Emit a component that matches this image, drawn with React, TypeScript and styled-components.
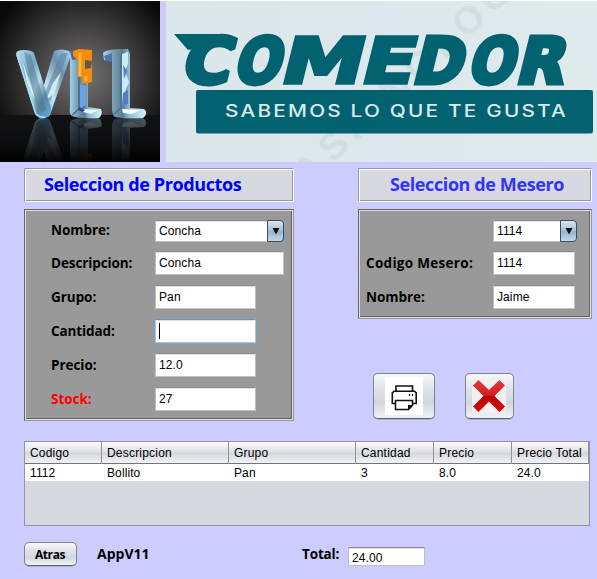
import React from "react";
import styled, { createGlobalStyle, css } from "styled-components";

const Global = createGlobalStyle`
  * { box-sizing: border-box; }
  body { margin: 0; background: #ccf; overflow: hidden; }
`;

const labelFont = '"Open Sans", "Noto Sans", sans-serif';
const inputFont = '"Liberation Sans", Arial, sans-serif';

const Screen = styled.main`
  width: 597px;
  height: 579px;
  background: #ccccff;
  border-top: 1px solid #fff;
  overflow: hidden;
  font-family: ${inputFont};
  color: #000;
`;

const Header = styled.header`
  display: flex;
  justify-content: space-between;
  height: 161px;
  svg { display: block; flex: none; }
`;

const Columns = styled.div`
  display: grid;
  grid-template-columns: 270px 234px;
  column-gap: 64px;
  align-items: start;
  padding: 6px 0 0 24px;
  height: 279px;
`;

const Column = styled.section`
  display: flex;
  flex-direction: column;
  gap: 7px;
`;

const TitleBar = styled.div<{ $color: string; $indent: number }>`
  height: 34px;
  padding-left: ${(p) => p.$indent}px;
  border: 1px solid #999;
  border-right-color: #fff;
  border-bottom-color: #fff;
  background: #d6d9e0;
  box-shadow: inset 1px 1px #fff, inset -1px -1px #999;
  color: ${(p) => p.$color};
`;

const Heading = styled.h2<{ $track: number }>`
  margin: 0;
  font: 700 18px/30px ${labelFont};
  letter-spacing: ${(p) => p.$track}px;
  white-space: nowrap;
`;

const Panel = styled.div<{ $h: number; $pad: number; $label: number }>`
  height: ${(p) => p.$h}px;
  padding: 10px 0 0 ${(p) => p.$pad}px;
  display: grid;
  grid-template-columns: ${(p) => p.$label}px auto;
  grid-template-rows: 31px;
  grid-auto-rows: 34px;
  justify-content: start;
  align-content: start;
  background: #999;
  border: 1px solid #666;
  border-right-color: #999;
  border-bottom-color: #999;
  box-shadow: inset 1px 1px #ddd, inset -1px -1px #ddd, inset -2px -2px #666;
`;

const Label = styled.label<{ $track?: number; $red?: boolean }>`
  font: 700 13.5px/25px ${labelFont};
  letter-spacing: ${(p) => p.$track ?? -0.05}px;
  color: ${(p) => (p.$red ? "#f00" : "#000")};
  white-space: nowrap;
  &:first-child { line-height: 21px; }
`;

const Field = styled.div<{ $w: number; $h?: number; $focus?: boolean }>`
  width: ${(p) => p.$w}px;
  height: ${(p) => p.$h ?? 24}px;
  padding: 1px 3px 0;
  border: 1px solid #c0c0c0;
  border-top-color: #8c8c8c;
  background: #fff;
  box-shadow: inset 0 1px #e2e2e2;
  font: 12px/21px ${inputFont};
  letter-spacing: 0.1px;
  ${(p) => p.$focus && css`
    box-shadow: inset 0 1px #e2e2e2, 0 0 0 1px #73a4d1;
  `}
`;

const Caret = styled.i`
  display: block;
  width: 1px;
  height: 16px;
  margin: 2px 0 0;
  background: #000;
`;

const Combo = styled.div<{ $w: number }>`
  display: flex;
  width: ${(p) => p.$w}px;
  height: 22px;
`;

const ComboValue = styled.div`
  flex: 1;
  padding-left: 3px;
  border: 1px solid #c0c0c0;
  border-top-color: #8c8c8c;
  border-right: 0;
  background: #fff;
  box-shadow: inset 0 1px #e2e2e2;
  font: 12px/21px ${inputFont};
  letter-spacing: 0.1px;
`;

const ComboArrow = styled.div`
  display: grid;
  place-items: center;
  width: 17px;
  border: 1px solid #33506b;
  border-radius: 0 4px 4px 0;
  background: linear-gradient(#dbe5ee, #a9bed0 48%, #9cb4c9 52%, #c0d8ec);
`;

const Actions = styled.div`
  display: flex;
  gap: 30px;
  padding-left: 15px;
  margin-top: 47px;
`;

const Button = styled.button<{ $w: number; $h: number }>`
  display: grid;
  place-items: center;
  width: ${(p) => p.$w}px;
  height: ${(p) => p.$h}px;
  padding: 0 1px 0 0;
  border: 1px solid #80848e;
  border-bottom-color: #5b5f68;
  border-radius: 5px;
  background: linear-gradient(#f7f8fa, #dfe2e8 35%, #d3d6dd 65%, #f0f3fa);
  box-shadow: 0 1px #b0b1d6;
  color: #000;
  font: 700 12px/20px ${labelFont};
  letter-spacing: -0.4px;
`;

const ButtonText = styled.span`
  padding-top: 2px;
`;

const Table = styled.div`
  width: 566px;
  height: 85px;
  margin-left: 24px;
  border: 1px solid #92959f;
  background: #d6d9e0;
`;

const Row = styled.div<{ $head?: boolean }>`
  display: grid;
  grid-template-columns: 77px 127px 127px 78px 78px 77px;
  height: 17px;
  background: #fff;
  font: 12px/18px ${inputFont};
  letter-spacing: 0.1px;
  span { padding-left: 5px; white-space: nowrap; }
  ${(p) => p.$head && css`
    height: 22px;
    line-height: 22px;
    letter-spacing: 0.2px;
    background: linear-gradient(#fafbfc, #dfe2e7 45%, #d5d8de 55%, #f1f3f8);
    border-bottom: 1px solid #70747d;
    span { border-right: 1px solid #8e929b; }
  `}
`;

const Footer = styled.footer`
  display: flex;
  align-items: center;
  height: 26px;
  margin: 15px 0 0 24px;
`;

const AppName = styled.strong`
  width: 205px;
  margin-left: 20px;
  font: 700 14px/22px ${labelFont};
`;

const TotalLabel = styled.strong`
  width: 46px;
  font: 700 13.5px/22px ${labelFont};
  letter-spacing: -0.15px;
`;

const TotalField = styled(Field)`
  margin-top: 5px;
  padding-top: 0;
  line-height: 20px;
`;

const Logo = () => (
  <svg width="160" height="161" viewBox="0 1 160 161">
    <defs>
      <radialGradient id="back" cx=".52" cy=".46" r=".62">
        <stop offset="0" stopColor="#777474" />
        <stop offset=".4" stopColor="#4b494a" />
        <stop offset="1" stopColor="#090909" />
      </radialGradient>
      <linearGradient id="armLeft" x1="0" y1="0" x2="1" y2="1">
        <stop offset="0" stopColor="#b4e2f6" />
        <stop offset=".35" stopColor="#78a6be" />
        <stop offset=".55" stopColor="#b9e0ee" />
        <stop offset=".75" stopColor="#5d87a0" />
        <stop offset="1" stopColor="#56b0e0" />
      </linearGradient>
      <linearGradient id="armRight" x1="1" y1="0" x2="0" y2="1">
        <stop offset="0" stopColor="#a5dcf5" />
        <stop offset=".3" stopColor="#6c8fac" />
        <stop offset=".6" stopColor="#bfe6f4" />
        <stop offset="1" stopColor="#4a9ecb" />
      </linearGradient>
      <linearGradient id="steel" x2="1">
        <stop offset="0" stopColor="#a2d4ee" />
        <stop offset=".2" stopColor="#7fa6bb" />
        <stop offset=".45" stopColor="#587b92" />
        <stop offset=".6" stopColor="#8ebbd4" />
        <stop offset="1" stopColor="#d8f2fb" />
      </linearGradient>
      <linearGradient id="floor" x2="0" y2="1">
        <stop offset="0" stopColor="#131416" stopOpacity=".15" />
        <stop offset="1" stopColor="#000" stopOpacity=".95" />
      </linearGradient>
      <g id="mark">
        <path d="M54 51q8-3 15 0l2 4-21 60q-3 4-11 3l-3-6z" fill="url(#armRight)" />
        <path d="M61 53l7 0-18 49-6-7z" fill="#6386a4" opacity=".6" />
        <path d="M53 83l8-11-7 22-8 6z" fill="#e2f6fc" opacity=".85" />
        <path d="M16 54q0-4 8-4 8 0 10 3l17 55q0 8-6 10-7 1-10-4z" fill="url(#armLeft)" />
        <path d="M24 52l7 3 15 54-4 4-6-8z" fill="#4c7189" opacity=".45" />
        <path d="M22 60l8 23 5 16-8-16z" fill="#effcff" opacity=".75" />
        <path d="M17 55l19 59q4 4 9 3" stroke="#a9e1fc" strokeWidth="1.500" fill="none" />
        <path d="M70 51h18v56l13 2q2 6-2 9-20 1-27-2-3-2-2-10z" fill="url(#steel)" />
        <path d="M79 55v54l-7 6" stroke="#45687c" strokeWidth="1.500" fill="none" />
        <path d="M81 109l18 1-8 4-8-2z" fill="#e7faff" />
        <path d="M80 84l6 2v19l-6 3z" fill="#6ca2df" />
        <path d="M79 107l6 3-2 2-5-2z" fill="#2a459c" />
        <path d="M70 51l8-1v9l-6 1z" fill="#55647a" />
        <path d="M73 51l6-2 13 1v32l-10 2V77h-4V60l-5-4z" fill="#f58c0c" />
        <path d="M80 53v23M86 76v5" stroke="#ffb23e" strokeWidth="3" />
        <path d="M85 60l7 1-1 7-6 1z" fill="#60574f" />
        <path d="M103 53q2-4 25-4l2 5v54l14 1q5 4-1 9-18 1-28-1-3-2-3-9V61l-8-1z" fill="url(#steel)" />
        <path d="M104 56l8-3v9l-6-1z" fill="#5274aa" />
        <path d="M121 54v54l-7 6" stroke="#527388" strokeWidth="1.500" fill="none" />
        <path d="M122 54l6-2v12l-3 7 4 11-5 12 3 8-5 4z" fill="#c8edf8" />
        <path d="M123 65l4 6-3 8zM123 93l5-3v14l-6 2z" fill="#507fc4" />
        <path d="M122 109l19 1-9 4-9-1z" fill="#f1fcff" />
      </g>
    </defs>
    <rect y="1" width="160" height="161" fill="url(#back)" />
    <rect y="115" width="160" height="47" fill="#101113" />
    <use href="#mark" transform="matrix(1 0 0 -1 0 236)" opacity=".4" />
    <rect y="115" width="160" height="47" fill="url(#floor)" />
    <use href="#mark" />
  </svg>
);

/* letter, left edge, advance width */
const wordmark: [string, number, number][] = [
  ["C", 180, 48.5], ["O", 232.5, 46], ["M", 278, 82], ["E", 358.5, 53], ["D", 411, 49.5], ["O", 466.5, 46], ["R", 514.5, 47.6],
];

const Banner = () => (
  <svg width="431" height="161" viewBox="166 1 431 161">
    <defs>
      <linearGradient id="paper"><stop stopColor="#dbe7ea" /><stop offset=".5" stopColor="#dce8ed" /><stop offset="1" stopColor="#deeaeb" /></linearGradient>
    </defs>
    <rect x="166" y="1" width="431" height="161" fill="url(#paper)" />
    <rect x="196" y="90" width="397" height="43.500" rx="2" fill="#006270" />
    {wordmark.map(([ch, x, w]) => (
      <g key={x} transform={`translate(${x} 82.500) skewX(-14)`}>
        <text fontFamily="DejaVu Sans, sans-serif" fontWeight="700" fontSize="63" textLength={w} lengthAdjust="spacingAndGlyphs"
          fill="#006270" stroke="#006270" strokeWidth={ch === "M" || ch === "E" ? 3.5 : 5} strokeLinejoin="miter" strokeMiterlimit="2">{ch}</text>
      </g>
    ))}
    <path d="M174 34h48v9l-34 7z" fill="#006270" />
    <text x="225" y="117" fontFamily="Inter, sans-serif" fontWeight="500" fontSize="17" letterSpacing="1.800" textLength="343" lengthAdjust="spacingAndGlyphs" fill="#dce9eb">SABEMOS LO QUE TE GUSTA</text>
    <text transform="translate(308 187) rotate(-43)" fontFamily="Liberation Sans, sans-serif" fontWeight="700" fontSize="38" textLength="318" fill="#244c55" opacity=".06">ASHINGLOGO</text>
  </svg>
);

const Arrow = () => (
  <svg width="8" height="7"><path d="M.5 0h7L4 6.500z" fill="#111" /></svg>
);

const Select = ({ value, w }: { value: string; w: number }) => (
  <Combo $w={w}><ComboValue>{value}</ComboValue><ComboArrow><Arrow /></ComboArrow></Combo>
);

const PrinterIcon = () => (
  <svg width="38" height="38" viewBox="0 0 38 38">
    <path fill="#fff" d="M0 0h38v38H0z" />
    <g fill="none" stroke="#111" strokeWidth="1.600">
      <path d="M11 14V9h16.500v5M10.500 26.500H7.300V15.800l1.700-1.600h20.500l1.700 1.600v10.700h-3.500" />
      <path d="M10.500 23.500h17v5l-4 4h-13z" />
      <path d="M24.500 17v2M27.500 17v2" strokeWidth="1.200" />
    </g>
    <path d="M23 33v-5h5z" fill="#111" />
  </svg>
);

const CrossIcon = () => (
  <svg width="34" height="34" viewBox="0 0 34 34">
    <defs><linearGradient id="red" x2="0" y2="1"><stop stopColor="#df3d40" /><stop offset=".48" stopColor="#d21c20" /><stop offset=".52" stopColor="#b90205" /><stop offset="1" stopColor="#d80c0c" /></linearGradient></defs>
    <path fill="#f0f0f2" d="M0 0h34v34H0z" />
    <path d="M6.500 1L17 11 27.500 1 33 6.500 22.500 17 33 27.500 27.500 33 17 22.500 6.500 33 1 27.500 11.500 17 1 6.500z" fill="url(#red)" />
  </svg>
);

export default function App() {
  return (
    <>
      <Global />
      <Screen>
        <Header><Logo /><Banner /></Header>
        <Columns>
          <Column>
            <TitleBar $color="#0000ff" $indent={19}><Heading $track={-0.4}>Seleccion de Productos</Heading></TitleBar>
            <Panel $h={212} $pad={26} $label={104}>
              <Label>Nombre:</Label><Select value="Concha" w={129} />
              <Label $track={-0.1}>Descripcion:</Label><Field $w={129}>Concha</Field>
              <Label>Grupo:</Label><Field $w={101}>Pan</Field>
              <Label $track={-0.1}>Cantidad:</Label><Field $w={101} $focus><Caret /></Field>
              <Label>Precio:</Label><Field $w={101}>12.0</Field>
              <Label $red>Stock:</Label><Field $w={101}>27</Field>
            </Panel>
          </Column>
          <Column>
            <TitleBar $color="#3333ff" $indent={31}><Heading $track={-0.4}>Seleccion de Mesero</Heading></TitleBar>
            <Panel $h={110} $pad={7} $label={127}>
              <span /><Select value="1114" w={84} />
              <Label $track={0.3}>Codigo Mesero:</Label><Field $w={82}>1114</Field>
              <Label>Nombre:</Label><Field $w={82}>Jaime</Field>
            </Panel>
            <Actions>
              <Button $w={62} $h={46} aria-label="Imprimir"><PrinterIcon /></Button>
              <Button $w={49} $h={46} aria-label="Cancelar"><CrossIcon /></Button>
            </Actions>
          </Column>
        </Columns>
        <Table>
          <Row $head><span>Codigo</span><span>Descripcion</span><span>Grupo</span><span>Cantidad</span><span>Precio</span><span>Precio Total</span></Row>
          <Row><span>1112</span><span>Bollito</span><span>Pan</span><span>3</span><span>8.0</span><span>24.0</span></Row>
        </Table>
        <Footer>
          <Button $w={53} $h={24}><ButtonText>Atras</ButtonText></Button>
          <AppName>AppV11</AppName>
          <TotalLabel>Total:</TotalLabel>
          <TotalField $w={77} $h={19}>24.00</TotalField>
        </Footer>
      </Screen>
    </>
  );
}
